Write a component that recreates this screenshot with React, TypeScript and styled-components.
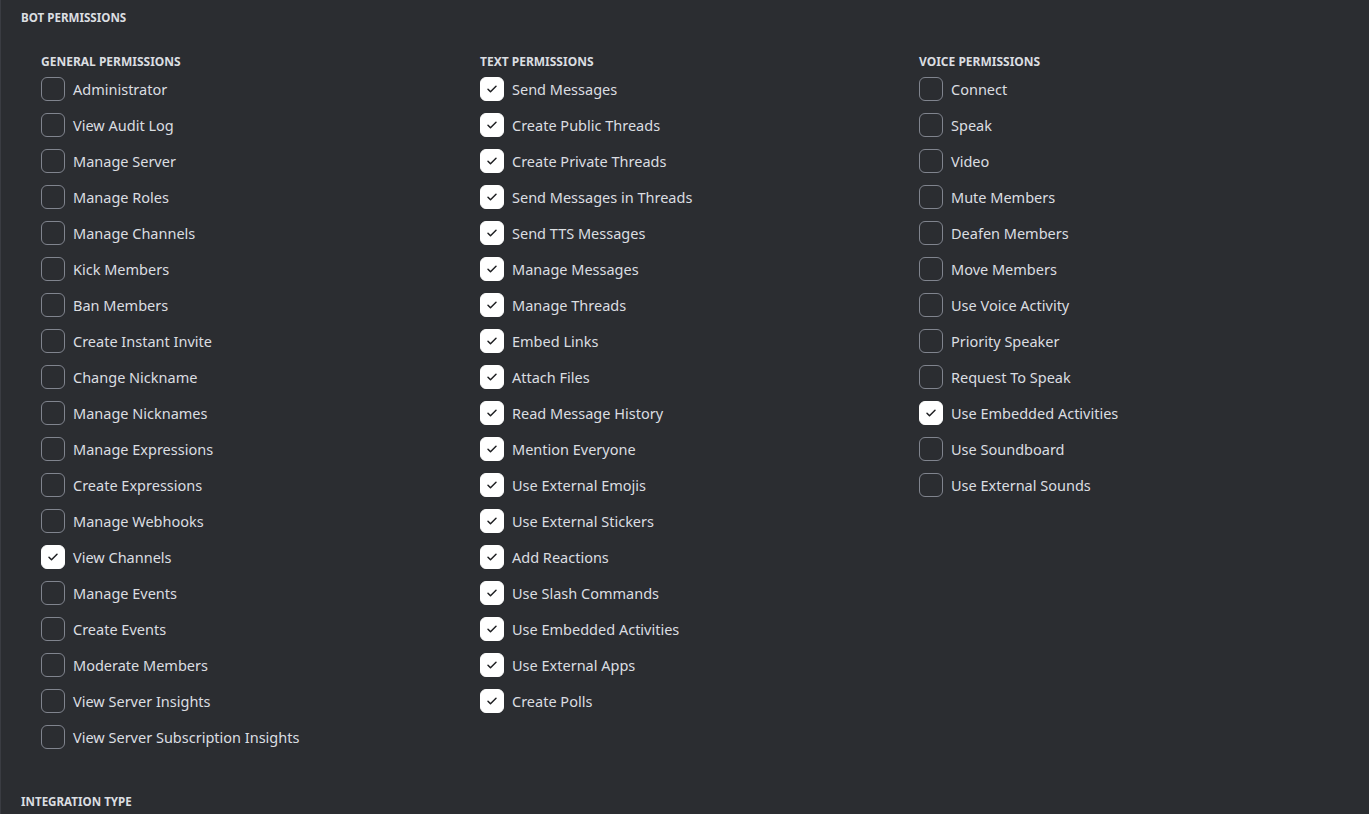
import styled, { createGlobalStyle } from "styled-components";

const GlobalStyle = createGlobalStyle`
  html, body {
    margin: 0;
    padding: 0;
    background: #2b2d31;
    font-family: "Noto Sans", "Open Sans", sans-serif;
  }
`;

const general: [string, boolean][] = [
  ["Administrator", false],
  ["View Audit Log", false],
  ["Manage Server", false],
  ["Manage Roles", false],
  ["Manage Channels", false],
  ["Kick Members", false],
  ["Ban Members", false],
  ["Create Instant Invite", false],
  ["Change Nickname", false],
  ["Manage Nicknames", false],
  ["Manage Expressions", false],
  ["Create Expressions", false],
  ["Manage Webhooks", false],
  ["View Channels", true],
  ["Manage Events", false],
  ["Create Events", false],
  ["Moderate Members", false],
  ["View Server Insights", false],
  ["View Server Subscription Insights", false],
];

const text: [string, boolean][] = [
  ["Send Messages", true],
  ["Create Public Threads", true],
  ["Create Private Threads", true],
  ["Send Messages in Threads", true],
  ["Send TTS Messages", true],
  ["Manage Messages", true],
  ["Manage Threads", true],
  ["Embed Links", true],
  ["Attach Files", true],
  ["Read Message History", true],
  ["Mention Everyone", true],
  ["Use External Emojis", true],
  ["Use External Stickers", true],
  ["Add Reactions", true],
  ["Use Slash Commands", true],
  ["Use Embedded Activities", true],
  ["Use External Apps", true],
  ["Create Polls", true],
];

const voice: [string, boolean][] = [
  ["Connect", false],
  ["Speak", false],
  ["Video", false],
  ["Mute Members", false],
  ["Deafen Members", false],
  ["Move Members", false],
  ["Use Voice Activity", false],
  ["Priority Speaker", false],
  ["Request To Speak", false],
  ["Use Embedded Activities", true],
  ["Use Soundboard", false],
  ["Use External Sounds", false],
];

const Page = styled.div`
  min-height: 814px;
  box-sizing: border-box;
  border-left: 1px solid #3a3c42;
  padding: 11px 20px 0 20px;
`;

const SectionTitle = styled.h2`
  margin: 0;
  font-size: 11.6px;
  line-height: 14px;
  font-weight: 700;
  color: #dbdee1;
  text-transform: uppercase;
`;

const Columns = styled.div`
  display: grid;
  grid-template-columns: repeat(3, 439px);
  padding: 30px 0 0 20px;
  height: 770px;
  box-sizing: border-box;
`;

const Column = styled.div`
  display: flex;
  flex-direction: column;
`;

const ColumnTitle = styled.h3`
  margin: 0 0 2px 0;
  font-size: 12px;
  line-height: 14px;
  font-weight: 700;
  color: #dbdee1;
  text-transform: uppercase;
`;

const Row = styled.label`
  display: flex;
  align-items: center;
  gap: 8px;
  height: 36px;
  cursor: pointer;
`;

const Box = styled.span<{ $checked: boolean }>`
  width: 24px;
  height: 24px;
  box-sizing: border-box;
  border-radius: 6px;
  flex-shrink: 0;
  display: flex;
  align-items: center;
  justify-content: center;
  background: ${(p) => (p.$checked ? "#ffffff" : "transparent")};
  border: 1px solid ${(p) => (p.$checked ? "#ffffff" : "#80848e")};
`;

const Label = styled.span`
  font-size: 14.5px;
  color: #dbdee1;
  line-height: 20px;
`;

const Check = () => (
  <svg width="12" height="12" viewBox="0 0 24 24" fill="none">
    <path
      d="M4 12.5l5 5L20 6.5"
      stroke="#1e1f22"
      strokeWidth="3"
      strokeLinecap="round"
      strokeLinejoin="round"
    />
  </svg>
);

const PermissionColumn = ({ title, items }: { title: string; items: [string, boolean][] }) => (
  <Column>
    <ColumnTitle>{title}</ColumnTitle>
    {items.map(([name, checked]) => (
      <Row key={name}>
        <Box $checked={checked}>{checked && <Check />}</Box>
        <Label>{name}</Label>
      </Row>
    ))}
  </Column>
);

export default function App() {
  return (
    <>
      <GlobalStyle />
      <Page>
        <SectionTitle>Bot Permissions</SectionTitle>
        <Columns>
          <PermissionColumn title="General Permissions" items={general} />
          <PermissionColumn title="Text Permissions" items={text} />
          <PermissionColumn title="Voice Permissions" items={voice} />
        </Columns>
        <SectionTitle>Integration Type</SectionTitle>
      </Page>
    </>
  );
}
